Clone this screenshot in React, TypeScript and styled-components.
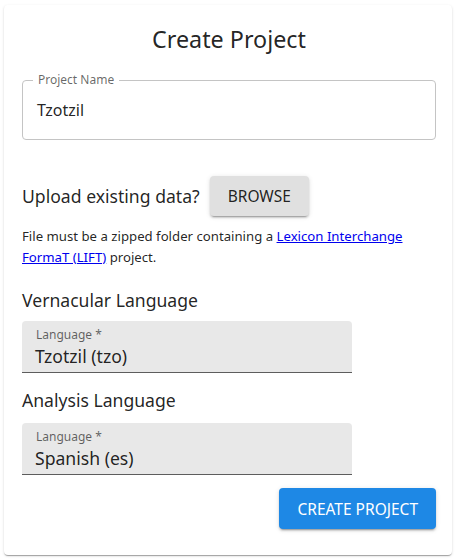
import styled, { createGlobalStyle } from "styled-components";

const GlobalStyle = createGlobalStyle`
  html, body {
    margin: 0;
    padding: 0;
    background: #ffffff;
  }
  body {
    font-family: "Noto Sans", "Open Sans", sans-serif;
    color: rgba(0, 0, 0, 0.87);
  }
`;

const Page = styled.div`
  padding: 5px 5px 4px 4px;
`;

const Card = styled.div`
  background: #fff;
  border-radius: 4px;
  box-shadow: 0px 2px 1px -1px rgba(0, 0, 0, 0.2),
    0px 1px 1px 0px rgba(0, 0, 0, 0.14), 0px 1px 3px 0px rgba(0, 0, 0, 0.12);
  padding: 18px 16px 26px 18px;
  display: flex;
  flex-direction: column;
`;

const Title = styled.h1`
  margin: 0 0 25px;
  font-size: 23.3px;
  font-weight: 400;
  line-height: 32px;
  text-align: center;
`;

const Outlined = styled.div`
  position: relative;
  border: 1px solid #c4c4c4;
  border-radius: 4px;
  height: 60px;
  box-sizing: border-box;
  padding: 17px 14px 0;
`;

// notch label sitting on the top border
const Legend = styled.span`
  position: absolute;
  top: -7px;
  left: 10px;
  padding: 0 5px;
  background: #fff;
  font-size: 12px;
  line-height: 12px;
  color: rgba(0, 0, 0, 0.6);
`;

const OutlinedValue = styled.div`
  font-size: 16px;
  line-height: 24px;
`;

const UploadRow = styled.div`
  display: flex;
  align-items: center;
  gap: 10px;
  margin-top: 36px;
`;

const SectionLabel = styled.div`
  font-size: 17.6px;
  line-height: 26px;
`;

const Button = styled.button<{ $primary?: boolean }>`
  font-family: inherit;
  font-size: 15.5px;
  font-weight: 400;
  text-transform: uppercase;
  border: none;
  border-radius: 4px;
  height: ${(p) => (p.$primary ? 41 : 40)}px;
  padding: 0 18px;
  background: ${(p) => (p.$primary ? "#1e88e5" : "#e0e0e0")};
  color: ${(p) => (p.$primary ? "#fff" : "rgba(0, 0, 0, 0.87)")};
  box-shadow: 0px 3px 1px -2px rgba(0, 0, 0, 0.2),
    0px 2px 2px 0px rgba(0, 0, 0, 0.14), 0px 1px 5px 0px rgba(0, 0, 0, 0.12);
  cursor: pointer;
`;

const Note = styled.p`
  margin: 10px 0 0;
  font-size: 13.2px;
  line-height: 21px;
`;

const Link = styled.a`
  color: #0000ee;
`;

const LangLabel = styled(SectionLabel)<{ $gap: number }>`
  margin-top: ${(p) => p.$gap}px;
`;

const Filled = styled.div<{ $gap: number }>`
  margin-top: ${(p) => p.$gap}px;
  width: 330px;
  height: 52px;
  box-sizing: border-box;
  background: #e8e8e8;
  border-radius: 4px 4px 0 0;
  border-bottom: 1px solid rgba(0, 0, 0, 0.6);
  padding: 6px 13px 0 14px;
`;

const FilledLabel = styled.div`
  font-size: 12px;
  line-height: 16px;
  color: rgba(0, 0, 0, 0.6);
`;

const FilledValue = styled.div`
  font-size: 17.6px;
  line-height: 26px;
  margin-left: -1px;
`;

const Actions = styled.div`
  display: flex;
  justify-content: flex-end;
  margin-top: 13px;
`;

export default function App() {
  return (
    <>
      <GlobalStyle />
      <Page>
        <Card>
          <Title>Create Project</Title>
          <Outlined>
            <Legend>Project Name</Legend>
            <OutlinedValue>Tzotzil</OutlinedValue>
          </Outlined>
          <UploadRow>
            <SectionLabel>Upload existing data?</SectionLabel>
            <Button>Browse</Button>
          </UploadRow>
          <Note>
            File must be a zipped folder containing a{" "}
            <Link href="#">Lexicon Interchange FormaT (LIFT)</Link> project.
          </Note>
          <LangLabel $gap={19}>Vernacular Language</LangLabel>
          <Filled $gap={8}>
            <FilledLabel>Language *</FilledLabel>
            <FilledValue>Tzotzil (tzo)</FilledValue>
          </Filled>
          <LangLabel $gap={14}>Analysis Language</LangLabel>
          <Filled $gap={10}>
            <FilledLabel>Language *</FilledLabel>
            <FilledValue>Spanish (es)</FilledValue>
          </Filled>
          <Actions>
            <Button $primary>Create Project</Button>
          </Actions>
        </Card>
      </Page>
    </>
  );
}
